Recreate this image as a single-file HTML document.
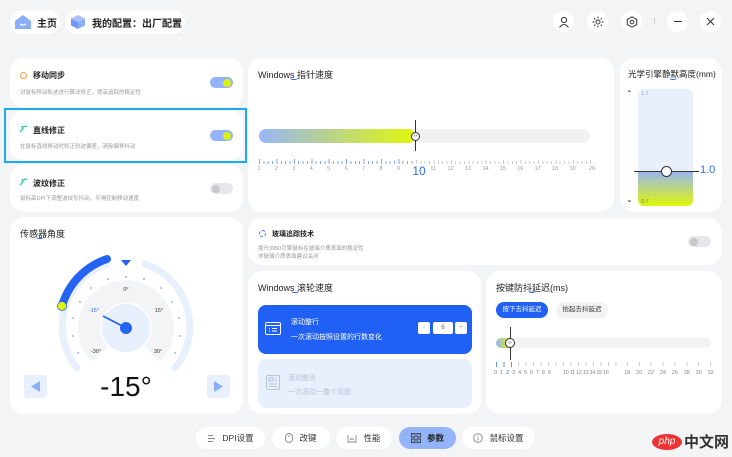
<!DOCTYPE html>
<html><head><meta charset="utf-8">
<style>
*{margin:0;padding:0;box-sizing:border-box}
body{width:732px;height:457px;background:#f3f4f6;font-family:"Liberation Sans","Noto Sans CJK SC",sans-serif;position:relative;overflow:hidden;color:#222}
.a{position:absolute}
.card{position:absolute;background:#fff;border-radius:14px}
.pill{position:absolute;background:#fff;border-radius:13px;height:24px;font-size:10px;font-weight:bold;display:flex;align-items:center;white-space:nowrap}
.ic{position:absolute;width:21px;height:21px;border-radius:50%;background:#fff;display:flex;align-items:center;justify-content:center}
.t{font-size:8px;font-weight:bold}
.s{font-size:5.5px;color:#999}
.tog{position:absolute;width:23px;height:11px;border-radius:6px}
.tab{position:absolute;top:427px;height:22px;border-radius:11px;background:#fff;font-size:8.5px;display:flex;align-items:center;justify-content:center;gap:6px;color:#333}
.ttl{position:absolute;font-size:9px;color:#222}
.ul{position:absolute;width:8px;height:3px;border-bottom:1.3px solid #2f6bf5;border-radius:0 0 4px 4px}
.lb{position:absolute;font-size:5.5px;color:#999;transform:translateX(-50%)}
</style></head><body>

<div class="pill" style="left:10px;top:10px;width:50px;padding-left:4px"><svg width="18" height="16" viewBox="0 0 18 16"><path d="M9 1 L17 7 V15 H1 V7 Z" fill="#8aaef7"/><path d="M6 10 Q9 12 12 10" stroke="#fff" stroke-width="1.3" fill="none"/></svg><span style="margin-left:5px">主页</span></div>
<div class="pill" style="left:65px;top:10px;width:120px;padding-left:5px"><svg width="16" height="16" viewBox="0 0 16 16"><path d="M8 1 L15 4.5 L8 8 L1 4.5Z" fill="#a9c1f8"/><path d="M1 4.5 L8 8 V15 L1 11.5Z" fill="#6f97f3"/><path d="M15 4.5 L8 8 V15 L15 11.5Z" fill="#8aaef7"/></svg><span style="margin-left:6px">我的配置：出厂配置</span></div>

<div class="ic" style="left:553px;top:11px"><svg width="12" height="12" viewBox="0 0 12 12" fill="none" stroke="#333" stroke-width="1"><circle cx="6" cy="4" r="2.6"/><path d="M1.5 11.5 Q6 5.5 10.5 11.5"/></svg></div>
<div class="ic" style="left:587px;top:11px"><svg width="12" height="12" viewBox="0 0 12 12" fill="none" stroke="#333" stroke-width="0.9"><circle cx="6" cy="6" r="2"/><path d="M6 0.5V2.5M6 9.5V11.5M0.5 6H2.5M9.5 6H11.5M2 2L3.4 3.4M8.6 8.6L10 10M2 10L3.4 8.6M8.6 3.4L10 2"/></svg></div>
<div class="ic" style="left:621px;top:11px"><svg width="12" height="12" viewBox="0 0 12 12" fill="none" stroke="#333" stroke-width="1"><path d="M6 0.8 L10.7 3.4 V8.6 L6 11.2 L1.3 8.6 V3.4Z"/><circle cx="6" cy="6" r="1.8"/></svg></div>
<div class="a" style="left:654px;top:18px;width:1px;height:6px;background:#ccc"></div>
<div class="ic" style="left:667px;top:11px"><div style="width:8px;height:1.3px;background:#333"></div></div>
<div class="ic" style="left:700px;top:11px"><svg width="9" height="9" viewBox="0 0 9 9" stroke="#333" stroke-width="1.1"><path d="M1 1L8 8M8 1L1 8"/></svg></div>

<!-- left cards -->
<div class="card" style="left:10px;top:58px;width:233px;height:49px"></div>
<div class="a" style="left:20px;top:72px;width:7px;height:7px;border:1.2px solid #f4a33f;border-radius:50%"></div>
<div class="a t" style="left:33px;top:70px">移动同步</div>
<div class="a s" style="left:20px;top:88px">对鼠标移动轨迹进行算法修正，提高追踪的稳定性</div>
<div class="tog" style="left:210px;top:77px;background:#94b3fb"><div class="a" style="right:2px;top:1.5px;width:8px;height:8px;border-radius:50%;background:#d9f20e"></div></div>

<div class="a" style="left:4px;top:108px;width:243px;height:55px;border:2.5px solid #1aaaf5"></div>
<div class="card" style="left:10px;top:111px;width:233px;height:49px"></div>
<svg class="a" style="left:19px;top:125px" width="9" height="8" viewBox="0 0 9 8"><path d="M1 7 L4 4 L3 2 L8 1" stroke="#1fc48c" stroke-width="1.2" fill="none"/></svg>
<div class="a t" style="left:33px;top:125px">直线修正</div>
<div class="a s" style="left:20px;top:142px">在鼠标直线移动时修正轨迹偏差，清除偏移抖动</div>
<div class="tog" style="left:210px;top:130px;background:#94b3fb"><div class="a" style="right:2px;top:1.5px;width:8px;height:8px;border-radius:50%;background:#d9f20e"></div></div>

<div class="card" style="left:10px;top:165px;width:233px;height:47px"></div>
<svg class="a" style="left:19px;top:178px" width="9" height="8" viewBox="0 0 9 8"><path d="M1 7 L4 4 L3 2 L8 1" stroke="#1fc48c" stroke-width="1.2" fill="none"/></svg>
<div class="a t" style="left:33px;top:178px">波纹修正</div>
<div class="a s" style="left:20px;top:194px">鼠标高DPI下调整波纹形抖动，平滑控制移动速度</div>
<div class="tog" style="left:210px;top:183px;background:#e5e7eb"><div class="a" style="left:2px;top:1.5px;width:8px;height:8px;border-radius:50%;background:#c8c8c8"></div></div>

<!-- pointer speed -->
<div class="card" style="left:248px;top:58px;width:366px;height:154px"></div>
<div class="ttl" style="left:258px;top:68px">Windows 指针速度</div><div class="ul" style="left:290px;top:77px"></div>
<div class="a" style="left:259px;top:129px;width:331px;height:14px;border-radius:7px;background:#f1f2f4"></div>
<div class="a" style="left:259px;top:129px;width:156px;height:14px;border-radius:7px;background:linear-gradient(90deg,#98b6f7,#e0f70a)"></div>
<div class="a" style="left:415px;top:120px;width:1px;height:31px;background:#333"></div>
<div class="a" style="left:411px;top:132px;width:9px;height:9px;border-radius:50%;background:#fff;border:1px solid #333;font-size:5px;text-align:center;line-height:7px">‹›</div>
<div class="a" style="left:259px;top:159px;width:157px;height:5px;background:repeating-linear-gradient(90deg,#7fa3f5 0 1px,transparent 1px 17.42px)"></div>
<div class="a" style="left:259px;top:161px;width:157px;height:3px;background:repeating-linear-gradient(90deg,#7fa3f5 0 1px,transparent 1px 4.355px)"></div>
<div class="a" style="left:416px;top:160px;width:175px;height:4px;background:repeating-linear-gradient(90deg,#ccc 0 1px,transparent 1px 17.42px)"></div>
<div class="a" style="left:416px;top:161px;width:175px;height:3px;background:repeating-linear-gradient(90deg,#ccc 0 1px,transparent 1px 4.355px)"></div>
<div class="lb" style="left:259px;top:166px">1</div><div class="lb" style="left:276.4px;top:166px">2</div><div class="lb" style="left:293.8px;top:166px">3</div><div class="lb" style="left:311.3px;top:166px">4</div><div class="lb" style="left:328.7px;top:166px">5</div><div class="lb" style="left:346.1px;top:166px">6</div><div class="lb" style="left:363.5px;top:166px">7</div><div class="lb" style="left:380.9px;top:166px">8</div><div class="lb" style="left:398.4px;top:166px">9</div>
<div class="lb" style="left:419px;top:164px;font-size:12px;color:#2f6bf5">10</div>
<div class="lb" style="left:433.2px;top:166px">11</div><div class="lb" style="left:450.6px;top:166px">12</div><div class="lb" style="left:468px;top:166px">13</div><div class="lb" style="left:485.5px;top:166px">14</div><div class="lb" style="left:502.9px;top:166px">15</div><div class="lb" style="left:520.3px;top:166px">16</div><div class="lb" style="left:537.7px;top:166px">17</div><div class="lb" style="left:555.2px;top:166px">18</div><div class="lb" style="left:572.6px;top:166px">19</div><div class="lb" style="left:592px;top:166px">20</div>

<!-- optical -->
<div class="card" style="left:620px;top:58px;width:102px;height:154px"></div>
<div class="ttl" style="left:628px;top:68px;font-size:8.5px">光学引擎静默高度(mm)</div><div class="ul" style="left:669px;top:77px"></div>
<div class="a" style="left:638px;top:89px;width:55px;height:117px;border-radius:6px;background:#e9f0fd;overflow:hidden"><div class="a" style="left:0;bottom:0;width:55px;height:35px;background:linear-gradient(180deg,#98b6f7,#e0f70a)"></div></div>
<div class="a" style="left:641px;top:91px;font-size:5.5px;color:#8aa0d8">1.7</div>
<div class="a" style="left:641px;top:199px;font-size:5.5px;color:#777">0.7</div>
<div class="a" style="left:626px;top:89px;font-size:8px;color:#333">⌃</div>
<div class="a" style="left:626px;top:195px;font-size:8px;color:#333">⌄</div>
<div class="a" style="left:634px;top:171px;width:65px;height:1px;background:#333"></div>
<div class="a" style="left:661px;top:166px;width:11px;height:11px;border-radius:50%;background:#fff;border:1px solid #333"></div>
<div class="a" style="left:700px;top:164px;font-size:11px;color:#2f6bf5">1.0</div>

<!-- sensor angle -->
<div class="card" style="left:10px;top:217px;width:233px;height:197px"></div>
<div class="ttl" style="left:20px;top:227px">传感器角度</div><div class="ul" style="left:36px;top:236px"></div>
<svg class="a" style="left:10px;top:217px" width="233" height="197" viewBox="10 217 233 197">
<path d="M77 368 A66 66 0 0 1 107 264" stroke="#e8f0fd" stroke-width="7" fill="none" stroke-linecap="round"/>
<path d="M145 264 A66 66 0 0 1 175 368" stroke="#e8f0fd" stroke-width="7" fill="none" stroke-linecap="round"/>
<path d="M107 259 A70 70 0 0 0 62 306" stroke="#2563f5" stroke-width="8" fill="none" stroke-linecap="round"/>
<circle cx="62" cy="306" r="4.5" fill="#e0f70a" stroke="#2563f5" stroke-width="0.8"/>
<path d="M121 260 H131 L126 266Z" fill="#2563f5"/>
<path d="M92 362 A48 48 0 1 1 160 362 L143 345 A24 24 0 1 0 109 345 Z" fill="#f3f4f6"/>
<circle cx="126" cy="328" r="25" fill="#e8f0fd" stroke="#fff" stroke-width="1.5"/>
<g fill="#7fa3f5"><circle cx="126" cy="277" r=".9"/><circle cx="144" cy="279" r=".9"/><circle cx="108" cy="279" r=".9"/><circle cx="161" cy="288" r=".9"/><circle cx="91" cy="288" r=".9"/><circle cx="172" cy="302" r=".9"/><circle cx="80" cy="302" r=".9"/><circle cx="179" cy="318" r=".9"/><circle cx="73" cy="318" r=".9"/><circle cx="180" cy="336" r=".9"/><circle cx="73" cy="336" r=".9"/><circle cx="175" cy="353" r=".9"/><circle cx="78" cy="353" r=".9"/></g>
<line x1="126" y1="328" x2="103" y2="316" stroke="#2563f5" stroke-width="1.8"/>
<circle cx="126" cy="328" r="6" fill="#2563f5"/>
<g font-size="5.5" text-anchor="middle" font-family="Liberation Sans,sans-serif"><text x="126" y="291" fill="#333">0°</text><text x="94" y="312" fill="#2f6bf5">-15°</text><text x="159" y="312" fill="#333">15°</text><text x="96" y="353" fill="#333">-30°</text><text x="158" y="353" fill="#333">30°</text></g>
<rect x="24" y="375" width="23" height="23" rx="3" fill="#e8f0fd"/><path d="M40 381 V392 L31 386.5Z" fill="#8aaef7"/>
<rect x="207" y="375" width="23" height="23" rx="3" fill="#e8f0fd"/><path d="M214 381 V392 L223 386.5Z" fill="#8aaef7"/>
<text x="126" y="396" font-size="28" text-anchor="middle" fill="#111" font-family="Liberation Sans,sans-serif">-15°</text>
</svg>

<!-- glass -->
<div class="card" style="left:248px;top:218px;width:474px;height:47px"></div>
<div class="a" style="left:259px;top:230px;width:7px;height:7px;border:1.2px dashed #2f6bf5;border-radius:50%"></div>
<div class="a t" style="left:272px;top:229px;font-size:7px">玻璃追踪技术</div>
<div class="a s" style="left:258px;top:244px">提升3950引擎鼠标在玻璃介质表面的稳定性</div>
<div class="a s" style="left:258px;top:252px">非玻璃介质表面建议关闭</div>
<div class="tog" style="left:688px;top:236px;background:#e5e7eb"><div class="a" style="left:2px;top:1.5px;width:8px;height:8px;border-radius:50%;background:#c8c8c8"></div></div>

<!-- scroll -->
<div class="card" style="left:248px;top:271px;width:233px;height:143px"></div>
<div class="ttl" style="left:258px;top:281px">Windows 滚轮速度</div><div class="ul" style="left:291px;top:290px"></div>
<div class="a" style="left:258px;top:305px;width:214px;height:49px;border-radius:8px;background:#2160f4"></div>
<svg class="a" style="left:265px;top:322px" width="16" height="13" viewBox="0 0 16 13" fill="none" stroke="#fff" stroke-width="1"><rect x=".5" y=".5" width="15" height="12" rx="1.5"/><path d="M.5 3.5H15.5M4 6.5H5M7 6.5H12M4 9H5M7 9H12"/></svg>
<div class="a" style="left:291px;top:317px;font-size:7px;color:#fff">滚动整行</div>
<div class="a" style="left:291px;top:332px;font-size:7px;color:#fff">一次滚动按照设置的行数变化</div>
<div class="a" style="left:418px;top:322px;width:12px;height:12px;background:#fff;border-radius:2px;font-size:6px;color:#999;text-align:center;line-height:12px">-</div>
<div class="a" style="left:433px;top:322px;width:20px;height:12px;background:#fff;border-radius:2px;font-size:6px;color:#666;text-align:center;line-height:12px">6</div>
<div class="a" style="left:455px;top:322px;width:12px;height:12px;background:#fff;border-radius:2px;font-size:6px;color:#999;text-align:center;line-height:12px">+</div>
<div class="a" style="left:258px;top:359px;width:214px;height:49px;border-radius:8px;background:#e8f0fd"></div>
<svg class="a" style="left:266px;top:375px" width="14" height="15" viewBox="0 0 14 15" fill="none" stroke="#b5c3dc" stroke-width="1"><rect x=".5" y=".5" width="13" height="14" rx="1.5"/><rect x="3" y="3" width="4" height="3"/><path d="M9 3.5H11M9 5.5H11M3 9H11M3 11.5H11"/></svg>
<div class="a" style="left:288px;top:373px;font-size:7px;color:#b5c0d3">滚动整页</div>
<div class="a" style="left:288px;top:387px;font-size:7px;color:#b5c0d3">一次滚动一整个页面</div>

<!-- debounce -->
<div class="card" style="left:486px;top:271px;width:236px;height:143px"></div>
<div class="ttl" style="left:496px;top:281px">按键防抖延迟(ms)</div><div class="ul" style="left:528px;top:290px"></div>
<div class="a" style="left:496px;top:302px;width:52px;height:16px;border-radius:8px;background:#2160f4;color:#fff;font-size:6.5px;text-align:center;line-height:16px">按下去抖延迟</div>
<div class="a" style="left:556px;top:302px;width:52px;height:16px;border-radius:8px;background:#f1f2f4;color:#333;font-size:6.5px;text-align:center;line-height:16px">抬起去抖延迟</div>
<div class="a" style="left:496px;top:338px;width:215px;height:10px;border-radius:5px;background:#f1f2f4"></div>
<div class="a" style="left:496px;top:338px;width:15px;height:10px;border-radius:5px 0 0 5px;background:linear-gradient(90deg,#98b6f7,#e0f70a)"></div>
<div class="a" style="left:510px;top:327px;width:1px;height:33px;background:#333"></div>
<div class="a" style="left:505px;top:338px;width:10px;height:10px;border-radius:50%;background:#fff;border:1px solid #333;font-size:5px;text-align:center;line-height:8px">‹›</div>
<div class="a" style="left:496px;top:362px;width:17px;height:5px;background:repeating-linear-gradient(90deg,#5f8ef5 0 1px,transparent 1px 7.5px)"></div>
<div class="a" style="left:518px;top:362px;width:100px;height:4px;background:repeating-linear-gradient(90deg,#ccc 0 1px,transparent 1px 7.5px)"></div>
<div class="a" style="left:627px;top:362px;width:86px;height:4px;background:repeating-linear-gradient(90deg,#ccc 0 1px,transparent 1px 11.86px)"></div>
<div class="a" style="left:494px;top:370px;font-size:5.5px;color:#888;letter-spacing:0;white-space:nowrap;word-spacing:1.4px">0 1 <span style="color:#2f6bf5">2</span> 3 4 5 6 7 8 9</div>
<div class="a" style="left:563px;top:370px;font-size:5.5px;color:#888;white-space:nowrap;letter-spacing:-0.3px">10 11 12 13 14 15 16</div>
<div class="a" style="left:624px;top:370px;font-size:5.5px;color:#888;white-space:nowrap;word-spacing:4.3px">18 20 22 24 26 28 30 32</div>

<!-- tabs -->
<div class="tab" style="left:196px;width:69px"><svg width="9" height="9" viewBox="0 0 9 9" stroke="#888" stroke-width="1"><path d="M1 1.5H6M1 4.5H8M1 7.5H6"/></svg>DPI设置</div>
<div class="tab" style="left:272px;width:58px"><svg width="8" height="10" viewBox="0 0 8 10" fill="none" stroke="#888" stroke-width=".9"><rect x=".5" y=".5" width="7" height="9" rx="3.5"/><path d="M4 2V4"/></svg>改键</div>
<div class="tab" style="left:336px;width:56px"><svg width="10" height="9" viewBox="0 0 10 9" fill="none" stroke="#888" stroke-width=".9"><path d="M1 1V8H9V1M3.5 6V4.5M5 6V3.5M6.5 6V5"/></svg>性能</div>
<div class="tab" style="left:399px;width:57px;background:#93b4fb;color:#222;font-weight:bold"><svg width="10" height="10" viewBox="0 0 10 10" fill="none" stroke="#333" stroke-width=".9"><rect x=".5" y=".5" width="3.5" height="3.5"/><rect x="6" y=".5" width="3.5" height="3.5"/><rect x=".5" y="6" width="3.5" height="3.5"/><rect x="6" y="6" width="3.5" height="3.5"/></svg>参数</div>
<div class="tab" style="left:462px;width:73px"><svg width="10" height="10" viewBox="0 0 10 10" fill="none" stroke="#888" stroke-width=".9"><circle cx="5" cy="5" r="4.3"/><path d="M5 4.3V7.5M5 2.5V3.2"/></svg>鼠标设置</div>

<div class="a" style="left:652px;top:434px;width:30px;height:16px;border-radius:50%;background:#e33;color:#fff;font-size:10px;font-style:italic;text-align:center;line-height:16px">php</div>
<div class="a" style="left:684px;top:431px;font-size:15px;font-weight:bold;color:#333">中文网</div>
</body></html>
